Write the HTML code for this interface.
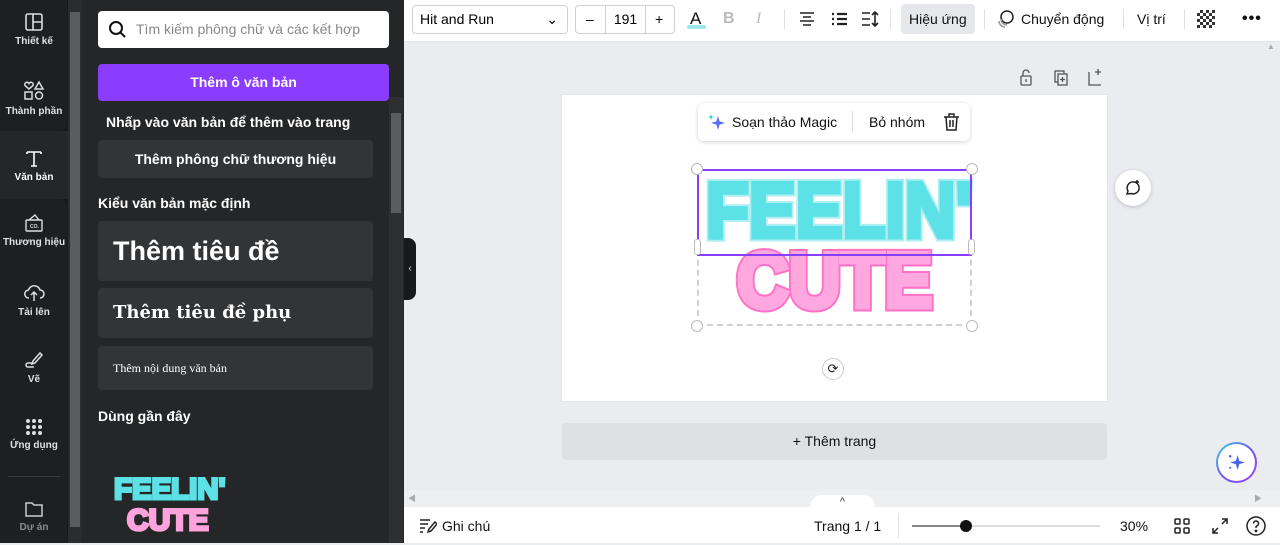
<!DOCTYPE html>
<html><head><meta charset="utf-8">
<style>
*{box-sizing:border-box;margin:0;padding:0}
body{width:1280px;height:543px;overflow:hidden;font-family:"Liberation Sans","Noto Sans CJK SC",sans-serif;background:#ebecf0;position:relative}
.abs{position:absolute}
#rail{left:0;top:0;width:68px;height:543px;background:#18191b}
.ri{position:absolute;left:0;width:68px;text-align:center;color:#e0e0e0;font-size:10px;font-weight:bold}
.ri svg{display:block;margin:0 auto 4px}
#sb1{left:68px;top:0;width:14px;height:543px;background:#2b2c2e}
#panel{left:82px;top:0;width:322px;height:543px;background:#252627;color:#fff}
.btn{position:absolute;border-radius:4px;background:#333436;color:#fff}
#tb{left:404px;top:0;width:876px;height:42px;background:#fff;border-bottom:1px solid #e4e4e6}
.tt{position:absolute;top:0;height:38px;line-height:38px;font-size:14px;color:#111}
#bot{left:404px;top:507px;width:876px;height:36px;background:#fff}
.fat{paint-order:stroke fill;font-weight:900;position:absolute}
</style></head><body>
<div id="rail" class="abs">
 <div style="position:absolute;left:0;top:0;width:67px;height:131px;background:#1e1f21;border-radius:0 0 8px 0"></div>
 <div style="position:absolute;left:0;top:199px;width:67px;height:344px;background:#1e1f21;border-radius:0 8px 0 0"></div>
 <div style="position:absolute;left:0;top:131px;width:68px;height:68px;background:#252627"></div>
 <div class="ri" style="top:12px"><svg width="20" height="20" viewBox="0 0 20 20" fill="none" stroke="#ddd" stroke-width="1.6"><rect x="2" y="2" width="16" height="16" rx="2"/><path d="M9 2v16M9 10h9"/></svg>Thiết kế</div>
 <div class="ri" style="top:80px"><svg width="22" height="22" viewBox="0 0 22 22" fill="none" stroke="#ddd" stroke-width="1.5"><path d="M6 9 2 5.5a2 2 0 0 1 4-2 2 2 0 0 1 4 2z"/><path d="M16 2l4 7h-8z"/><rect x="2" y="12" width="7" height="7"/><circle cx="16" cy="15.5" r="3.5"/></svg>Thành phần</div>
 <div class="ri" style="top:148px;color:#fff"><svg width="20" height="20" viewBox="0 0 20 20" fill="none" stroke="#fff" stroke-width="1.6"><path d="M3 4h14M10 4v14M7 18h6M3 4v2M17 4v2"/></svg>Văn bản</div>
 <div class="ri" style="top:213px"><svg width="20" height="20" viewBox="0 0 20 20" fill="none" stroke="#ddd" stroke-width="1.4"><rect x="2" y="7" width="16" height="11" rx="1"/><path d="M5 7l6-5 4 5"/><text x="6" y="15" font-size="5" fill="#ddd" stroke="none">CO.</text></svg>Thương hiệu</div>
 <div class="ri" style="top:283px"><svg width="22" height="20" viewBox="0 0 22 20" fill="none" stroke="#ddd" stroke-width="1.5"><path d="M6 15a4 4 0 0 1-.5-8A6 6 0 0 1 17 7a4 4 0 0 1 0 8M11 18V9M8 12l3-3 3 3"/></svg>Tải lên</div>
 <div class="ri" style="top:350px"><svg width="20" height="20" viewBox="0 0 20 20" fill="none" stroke="#ddd" stroke-width="1.5"><path d="M9 11l7-8 2 2-7 8-3 1zM9 13H4a2 2 0 0 0 0 4h6"/></svg>Vẽ</div>
 <div class="ri" style="top:418px"><svg width="18" height="18" viewBox="0 0 18 18" fill="#ddd"><circle cx="3" cy="3" r="2"/><circle cx="9" cy="3" r="2"/><circle cx="15" cy="3" r="2"/><circle cx="3" cy="9" r="2"/><circle cx="9" cy="9" r="2"/><circle cx="15" cy="9" r="2"/><circle cx="3" cy="15" r="2"/><circle cx="9" cy="15" r="2"/><circle cx="15" cy="15" r="2"/></svg>Ứng dụng</div>
 <div style="position:absolute;left:8px;top:476px;width:52px;height:1px;background:#3a3b3d"></div>
 <div class="ri" style="top:500px;color:#8a8b8d"><svg width="20" height="18" viewBox="0 0 20 18" fill="none" stroke="#ccc" stroke-width="1.5"><path d="M2 3h6l2 2h8v11H2z"/></svg>Dự án</div>
</div>
<div id="sb1" class="abs"><div style="position:absolute;left:2px;top:12px;width:10px;height:515px;background:#5b5c5e"></div></div>
<div id="panel" class="abs">
 <div style="position:absolute;left:16px;top:11px;width:291px;height:37px;background:#fff;border-radius:4px;color:#888;font-size:14px;line-height:37px;padding-left:38px;white-space:nowrap;overflow:hidden">Tìm kiếm phông chữ và các kết hợp
  <svg style="position:absolute;left:10px;top:9px" width="19" height="19" viewBox="0 0 19 19" fill="none" stroke="#111" stroke-width="2"><circle cx="8" cy="8" r="6"/><path d="M12.5 12.5 17 17"/></svg></div>
 <div style="position:absolute;left:16px;top:64px;width:291px;height:37px;background:#8b3dff;border-radius:4px;text-align:center;line-height:37px;font-size:14px;font-weight:bold">Thêm ô văn bản</div>
 <div style="position:absolute;left:24px;top:114px;font-size:14px;font-weight:bold">Nhấp vào văn bản để thêm vào trang</div>
 <div class="btn" style="left:16px;top:140px;width:275px;height:38px;text-align:center;line-height:38px;font-size:14px;font-weight:bold">Thêm phông chữ thương hiệu</div>
 <div style="position:absolute;left:16px;top:195px;font-size:14px;font-weight:bold">Kiểu văn bản mặc định</div>
 <div class="btn" style="left:16px;top:221px;width:275px;height:60px;padding-left:15px;line-height:60px;font-size:27px;font-weight:bold">Thêm tiêu đề</div>
 <div class="btn" style="left:16px;top:288px;width:275px;height:50px;padding-left:15px;line-height:50px;font-size:18px;font-weight:bold;font-family:'DejaVu Serif','Liberation Serif',serif">Thêm tiêu đề phụ</div>
 <div class="btn" style="left:16px;top:346px;width:275px;height:44px;padding-left:15px;line-height:44px;font-size:12px;font-family:'Liberation Serif',serif">Thêm nội dung văn bản</div>
 <div style="position:absolute;left:16px;top:408px;font-size:14px;font-weight:bold">Dùng gần đây</div>
 <div class="fat" style="left:32px;top:474px;font-size:30px;line-height:32px;color:#5ce1e6;-webkit-text-stroke:3px #5ce1e6;transform:scaleX(.98);transform-origin:left">FEELIN'</div>
 <div class="fat" style="left:45px;top:505px;font-size:30px;line-height:32px;color:#ffa3dc;-webkit-text-stroke:3px #ffa3dc;transform:scaleX(1.0);transform-origin:left">CUTE</div>
 <div style="position:absolute;left:307px;top:97px;width:14px;height:446px;background:#2e2f31"><div style="position:absolute;left:2px;top:16px;width:10px;height:100px;background:#5b5c5e"></div></div>
</div>
<div class="abs" style="left:404px;top:238px;width:12px;height:62px;background:#18191b;border-radius:0 8px 8px 0;color:#ddd;font-size:10px;line-height:62px;text-align:center">‹</div>
<div id="tb" class="abs">
 <div style="position:absolute;left:8px;top:5px;width:156px;height:29px;border:1px solid #d0d0d4;border-radius:4px;font-size:14px;line-height:27px;padding-left:7px">Hit and Run<span style="position:absolute;right:9px;top:0">⌄</span></div>
 <div style="position:absolute;left:171px;top:5px;width:100px;height:29px;border:1px solid #d0d0d4;border-radius:4px;font-size:14px;line-height:27px">
  <span style="position:absolute;left:10px">–</span><div style="position:absolute;left:29px;top:0;width:41px;height:27px;border-left:1px solid #d0d0d4;border-right:1px solid #d0d0d4;text-align:center">191</div><span style="position:absolute;left:79px">+</span></div>
 <div class="tt" style="left:286px;font-size:17px">A<div style="position:absolute;left:-3px;top:25px;width:19px;height:4px;background:#9de8ea;border-radius:2px"></div></div>
 <div class="tt" style="left:319px;color:#bbb;font-weight:bold;font-size:16px">B</div>
 <div class="tt" style="left:352px;color:#bbb;font-style:italic;font-size:16px;font-family:'Liberation Serif',serif">I</div>
 <div style="position:absolute;left:380px;top:9px;width:1px;height:20px;background:#e0e0e0"></div>
 <svg style="position:absolute;left:395px;top:11px" width="16" height="16" viewBox="0 0 16 16" stroke="#222" stroke-width="1.6"><path d="M1 2h14M4 6h8M1 10h14M4 14h8"/></svg>
 <svg style="position:absolute;left:427px;top:11px" width="16" height="16" viewBox="0 0 16 16" stroke="#222" stroke-width="1.6"><path d="M6 3h10M6 8h10M6 13h10M1 3h2M1 8h2M1 13h2" stroke-width="2.2"/></svg>
 <svg style="position:absolute;left:457px;top:10px" width="18" height="18" viewBox="0 0 18 18" stroke="#222" stroke-width="1.6" fill="none"><path d="M1 3h8M1 9h8M1 15h8M14 2v14M11 5l3-3 3 3M11 13l3 3 3-3"/></svg>
 <div style="position:absolute;left:486px;top:9px;width:1px;height:20px;background:#e0e0e0"></div>
 <div class="tt" style="left:497px;top:4px;height:30px;line-height:30px;background:#e6e7ea;border-radius:4px;padding:0 8px">Hiệu ứng</div>
 <div style="position:absolute;left:580px;top:9px;width:1px;height:20px;background:#e0e0e0"></div>
 <svg style="position:absolute;left:592px;top:9px" width="20" height="20" viewBox="0 0 20 20" fill="none" stroke="#222" stroke-width="1.5"><circle cx="11" cy="8" r="6"/><path d="M5 10a6 6 0 0 0 6 6M3 12a6 6 0 0 0 6 6" stroke="#999"/></svg>
 <div class="tt" style="left:617px">Chuyển động</div>
 <div style="position:absolute;left:719px;top:9px;width:1px;height:20px;background:#e0e0e0"></div>
 <div class="tt" style="left:733px">Vị trí</div>
 <div style="position:absolute;left:780px;top:9px;width:1px;height:20px;background:#e0e0e0"></div>
 <div style="position:absolute;left:793px;top:10px;width:18px;height:18px;background:conic-gradient(#333 25%,#fff 0 50%,#333 0 75%,#fff 0) 0 0/6px 6px"></div>
 <div class="tt" style="left:838px;font-weight:bold;font-size:16px;letter-spacing:1px">•••</div>
</div>
<div class="abs" style="left:1262px;top:42px;width:18px;height:448px;background:#ebecf0;color:#aaa;font-size:8px;text-align:center">▲</div>
<svg class="abs" style="left:1018px;top:68px" width="90" height="18" viewBox="0 0 90 18" fill="none" stroke="#555" stroke-width="1.3"><rect x="3" y="8" width="10" height="9" rx="1"/><path d="M5 8V5a3 3 0 0 1 6 0M8 11v3"/><rect x="37" y="3" width="9" height="11"/><rect x="40" y="6" width="9" height="11" fill="#ebecf0"/><path d="M44.5 9v5M42 11.5h5"/><path d="M71 4v13h12M77 4h6M80 1v6"/></svg>
<div class="abs" style="left:562px;top:95px;width:545px;height:306px;background:#fff;box-shadow:0 0 2px rgba(0,0,0,.08)"></div>
<div class="abs" style="left:698px;top:103px;width:272px;height:38px;background:#fff;border-radius:6px;box-shadow:0 1px 4px rgba(0,0,0,.18);font-size:14px;line-height:38px;color:#111">
 <svg style="position:absolute;left:9px;top:10px" width="20" height="20" viewBox="0 0 20 20"><path d="M11 3l1.6 5.4L18 10l-5.4 1.6L11 17l-1.6-5.4L4 10l5.4-1.6z" fill="#5b6df0"/><path d="M4 1l.7 2.3L7 4l-2.3.7L4 7l-.7-2.3L1 4l2.3-.7z" fill="#24c8d8"/></svg>
 <span style="position:absolute;left:34px">Soạn thảo Magic</span>
 <div style="position:absolute;left:154px;top:8px;width:1px;height:22px;background:#e0e0e0"></div>
 <span style="position:absolute;left:171px">Bỏ nhóm</span>
 <svg style="position:absolute;left:245px;top:10px" width="17" height="18" viewBox="0 0 17 18" fill="none" stroke="#222" stroke-width="1.5"><path d="M1 4h15M6 4V1h5v3M3 4l1 13h9l1-13M7 7v7M10 7v7"/></svg>
</div>
<div class="fat" style="left:706px;top:170px;font-size:78px;line-height:80px;color:#5ce1e6;-webkit-text-stroke:9px #b0eff1;transform:scaleX(.9);transform-origin:left">FEELIN'</div>
<div class="fat" style="left:706px;top:170px;font-size:78px;line-height:80px;color:#5ce1e6;-webkit-text-stroke:5px #5ce1e6;transform:scaleX(.9);transform-origin:left">FEELIN'</div>
<div class="fat" style="left:737px;top:240px;font-size:78px;line-height:80px;color:#ffa8e0;-webkit-text-stroke:9px #ff70c6;transform:scaleX(.92);transform-origin:left">CUTE</div>
<div class="fat" style="left:737px;top:240px;font-size:78px;line-height:80px;color:#ffa8e0;-webkit-text-stroke:5px #ffa8e0;transform:scaleX(.92);transform-origin:left">CUTE</div>
<div class="abs" style="left:697px;top:169px;width:275px;height:157px;border:2px dashed #d0d0d4"></div>
<div class="abs" style="left:697px;top:169px;width:275px;height:87px;border:2px solid #8b3dff"></div>
<div class="abs" style="left:691px;top:163px;width:12px;height:12px;border-radius:50%;background:#fff;border:1px solid #bbb"></div>
<div class="abs" style="left:966px;top:163px;width:12px;height:12px;border-radius:50%;background:#fff;border:1px solid #bbb"></div>
<div class="abs" style="left:691px;top:320px;width:12px;height:12px;border-radius:50%;background:#fff;border:1px solid #bbb"></div>
<div class="abs" style="left:966px;top:320px;width:12px;height:12px;border-radius:50%;background:#fff;border:1px solid #bbb"></div>
<div class="abs" style="left:694px;top:239px;width:7px;height:16px;border-radius:3px;background:#fff;border:1px solid #bbb"></div>
<div class="abs" style="left:968px;top:239px;width:7px;height:16px;border-radius:3px;background:#fff;border:1px solid #bbb"></div>
<div class="abs" style="left:822px;top:358px;width:22px;height:22px;border-radius:50%;background:#fff;border:1px solid #ccc;font-size:13px;text-align:center;line-height:20px;color:#222">⟳</div>
<div class="abs" style="left:1115px;top:170px;width:36px;height:36px;border-radius:50%;background:#fff;box-shadow:0 1px 4px rgba(0,0,0,.2)">
 <svg style="position:absolute;left:8px;top:8px" width="20" height="20" viewBox="0 0 20 20" fill="none" stroke="#222" stroke-width="1.5"><path d="M4 16l1-3a6 6 0 1 1 3 2.5z"/><path d="M14 2v4M12 4h4"/></svg></div>
<div class="abs" style="left:562px;top:423px;width:545px;height:37px;background:#dfe0e4;border-radius:4px;text-align:center;line-height:37px;font-size:14px;color:#111">+ Thêm trang</div>
<div class="abs" style="left:1216px;top:442px;width:41px;height:41px;border-radius:50%;background:linear-gradient(135deg,#3fd3e0,#6a5cf0,#9b45f0);padding:2px"><div style="width:37px;height:37px;border-radius:50%;background:#fff;position:relative"><svg style="position:absolute;left:8px;top:8px" width="21" height="21" viewBox="0 0 20 20"><path d="M11 3l1.6 5.4L18 10l-5.4 1.6L11 17l-1.6-5.4L4 10l5.4-1.6z" fill="#4a62e8"/><circle cx="4" cy="4" r="1.2" fill="#4a62e8"/><circle cx="4" cy="15" r="1" fill="#4a62e8"/></svg></div></div>
<div class="abs" style="left:404px;top:490px;width:876px;height:17px;background:#eeeff1;color:#aaa;font-size:8px;line-height:17px"><span style="position:absolute;left:4px">◀</span><span style="position:absolute;right:18px">▶</span></div>
<div class="abs" style="left:810px;top:495px;width:65px;height:14px;background:#fff;border-radius:12px 12px 0 0;text-align:center;font-size:11px;color:#333;line-height:14px">^</div>
<div id="bot" class="abs">
 <svg style="position:absolute;left:15px;top:11px" width="18" height="16" viewBox="0 0 18 16" fill="none" stroke="#222" stroke-width="1.5"><path d="M1 2h10M1 6h8M1 10h5M1 14h3M9 14l1-3 6-7 2 2-6 7z"/></svg>
 <div style="position:absolute;left:38px;top:0;line-height:38px;font-size:14px;color:#111">Ghi chú</div>
 <div style="position:absolute;left:410px;top:0;line-height:38px;font-size:14px;color:#111">Trang 1 / 1</div>
 <div style="position:absolute;left:494px;top:7px;width:1px;height:24px;background:#e0e0e0"></div>
 <div style="position:absolute;left:508px;top:18px;width:188px;height:2px;background:#dcdde0"><div style="width:55px;height:2px;background:#888"></div></div>
 <div style="position:absolute;left:556px;top:13px;width:12px;height:12px;border-radius:50%;background:#111"></div>
 <div style="position:absolute;left:716px;top:0;line-height:38px;font-size:14px;color:#111">30%</div>
 <svg style="position:absolute;left:770px;top:11px" width="16" height="16" viewBox="0 0 16 16" fill="none" stroke="#222" stroke-width="1.5"><rect x="1" y="1" width="5" height="5" rx="1"/><rect x="10" y="1" width="5" height="5" rx="1"/><rect x="1" y="10" width="5" height="5" rx="1"/><rect x="10" y="10" width="5" height="5" rx="1"/></svg>
 <svg style="position:absolute;left:808px;top:11px" width="16" height="16" viewBox="0 0 16 16" fill="none" stroke="#222" stroke-width="1.5"><path d="M10 1h5v5M15 1l-5 5M6 15H1v-5M1 15l5-5"/></svg>
 <svg style="position:absolute;left:842px;top:9px" width="20" height="20" viewBox="0 0 20 20" fill="none" stroke="#222" stroke-width="1.5"><circle cx="10" cy="10" r="9"/><path d="M7.5 7.5a2.5 2.5 0 1 1 3.5 2.3c-.7.3-1 .8-1 1.5V12"/><circle cx="10" cy="15" r=".6" fill="#222"/></svg>
</div>
</body></html>
